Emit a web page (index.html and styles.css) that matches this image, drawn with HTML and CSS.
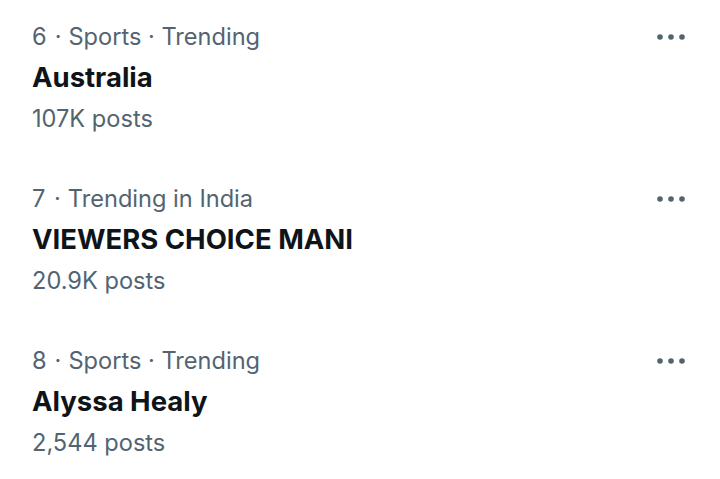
FILE: index.html
```html
<!DOCTYPE html>
<html>
<head>
<meta charset="utf-8">
<link rel="stylesheet" href="styles.css">
</head>
<body>
<div class="list">
  <div class="trend">
    <div class="info">
      <div class="meta"><span class="rank">6</span><span class="sep">·</span>Sports · Trending</div>
      <div class="title">Australia</div>
      <div class="count">107K posts</div>
    </div>
    <div class="more"><svg width="28" height="6" viewBox="0 0 28 6"><circle cx="3" cy="3" r="2.8"/><circle cx="14" cy="3" r="2.8"/><circle cx="25" cy="3" r="2.8"/></svg></div>
  </div>
  <div class="trend">
    <div class="info">
      <div class="meta"><span class="rank">7</span><span class="sep">·</span>Trending in India</div>
      <div class="title">VIEWERS CHOICE MANI</div>
      <div class="count">20.9K posts</div>
    </div>
    <div class="more"><svg width="28" height="6" viewBox="0 0 28 6"><circle cx="3" cy="3" r="2.8"/><circle cx="14" cy="3" r="2.8"/><circle cx="25" cy="3" r="2.8"/></svg></div>
  </div>
  <div class="trend">
    <div class="info">
      <div class="meta"><span class="rank">8</span><span class="sep">·</span>Sports · Trending</div>
      <div class="title">Alyssa Healy</div>
      <div class="count">2,544 posts</div>
    </div>
    <div class="more"><svg width="28" height="6" viewBox="0 0 28 6"><circle cx="3" cy="3" r="2.8"/><circle cx="14" cy="3" r="2.8"/><circle cx="25" cy="3" r="2.8"/></svg></div>
  </div>
</div>
</body>
</html>
```

FILE: styles.css
```css
html, body {
  margin: 0;
  padding: 0;
  background: #ffffff;
}
body {
  font-family: Inter, "Noto Sans", sans-serif;
  width: 720px;
  height: 479px;
  overflow: hidden;
}
.list {
  display: flex;
  flex-direction: column;
}
.trend {
  display: flex;
  justify-content: space-between;
  align-items: flex-start;
  padding: 16px 35px 23px 32px;
  height: 123px;
}
.info {
  display: flex;
  flex-direction: column;
}
.meta, .count {
  font-size: 23.6px;
  line-height: 41px;
  color: #536471;
}
.rank {
  display: inline-block;
  min-width: 14px;
}
.sep {
  margin: 0 7px 0 8px;
}
.title {
  font-size: 27.5px;
  line-height: 41px;
  font-weight: 700;
  color: #0f1419;
}
.more {
  padding-top: 18px;
  display: flex;
}
.more svg {
  fill: #536471;
}
```
